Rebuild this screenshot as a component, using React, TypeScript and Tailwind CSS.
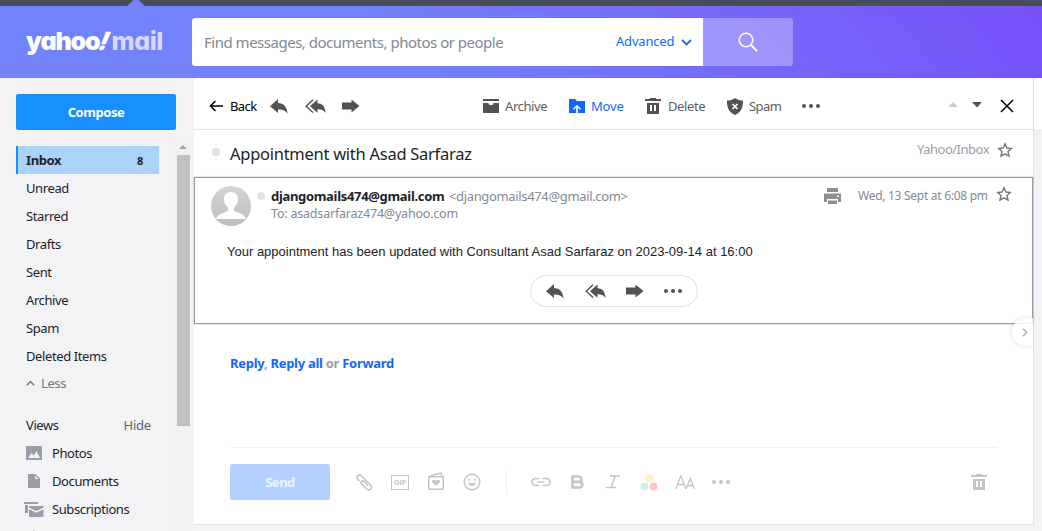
import type { ReactNode } from "react";

type IconProps = { w: number; h: number; className?: string; children: ReactNode };

function Icon({ w, h, className = "", children }: IconProps) {
  return (
    <svg width={w} height={h} viewBox={`0 0 ${w} ${h}`} fill="currentColor" className={`shrink-0 ${className}`}>
      {children}
    </svg>
  );
}

function ReplyIcon({ className = "" }) {
  return (
    <Icon w={18} h={15} className={className}>
      <path d="M8 0v4c5.500 0 9 3.500 9.500 11-2-3.500-4.500-4.500-9.500-4.500v3.500L0 7.300z" />
    </Icon>
  );
}

function ReplyAllIcon({ className = "" }) {
  return (
    <Icon w={21} h={15} className={className}>
      <path d="M12.500.500v3.700c4.500 0 7.700 3 8 9.800-2-3-4-3.800-8-3.800v3.500L5 7.200z" />
      <path d="M8 .700 1.200 7.200 8 13.500" fill="none" stroke="currentColor" strokeWidth="1.400" />
    </Icon>
  );
}

function ForwardIcon({ className = "" }) {
  return (
    <Icon w={18} h={14} className={className}>
      <path d="M0 3.500h9.500V.500L17.500 7l-8 6.500v-3H0z" />
    </Icon>
  );
}

function DotsIcon({ className = "" }) {
  return (
    <Icon w={18} h={6} className={className}>
      <circle cx="2" cy="3" r="2" />
      <circle cx="9" cy="3" r="2" />
      <circle cx="16" cy="3" r="2" />
    </Icon>
  );
}

function TrashIcon({ className = "" }) {
  return (
    <Icon w={16} h={16} className={className}>
      <path d="M0 1h5V0h6v1h5v2H0zM2 5h12v11H2zm3 2v6h2V7zm4 0v6h2V7z" fillRule="evenodd" />
    </Icon>
  );
}

function StarIcon({ className = "" }) {
  return (
    <Icon w={16} h={16} className={className}>
      <path
        d="M8 1.800 9.900 6l4.500.500-3.400 3 1 4.600L8 11.800l-4 2.300 1-4.600-3.400-3L6.100 6z"
        fill="none"
        stroke="currentColor"
        strokeWidth="1.400"
      />
    </Icon>
  );
}

const folders = ["Unread", "Starred", "Drafts", "Sent", "Archive", "Spam", "Deleted Items"];

function Header() {
  return (
    <header className="shrink-0">
      <div className="flex h-[6px] bg-[#474e57]">
        <Icon w={18} h={6} className="ml-[127px] text-[#7282fb]">
          <path d="M0 6 6 .500Q9-1.500 12 .500L18 6z" />
        </Icon>
      </div>
      <div className="flex h-[72px] items-start bg-[linear-gradient(50deg,#7282fb_0%,#7282fb_38%,#746bfa_66%,#7850fa_100%)]">
        <div className="mt-[19px] ml-[26px] flex h-[32px] w-[166px] font-[Inter,sans-serif] text-[25px] leading-[32px] font-black tracking-[-1.100px] whitespace-nowrap text-white [font-feature-settings:'cv11','ss01']">
          <span>yahoo</span>
          <span className="inline-block w-[12px] -skew-x-[22deg]">!</span>
          <span className="font-extrabold tracking-[-0.500px] text-[#d7dafe]">mail</span>
        </div>
        <div className="mt-[12px] flex h-[48px] w-[511px] items-center rounded-l-[3px] bg-white">
          <span className="ml-[12px] w-[412px] pt-px text-[15px] tracking-[-0.490px] whitespace-nowrap text-[#828a93]">
            Find messages, documents, photos or people
          </span>
          <span className="w-[65px] text-[13px] tracking-[-0.200px] text-[#0f69ff]">Advanced</span>
          <Icon w={11} h={7} className="text-[#0f69ff]">
            <path d="M1 1l4.500 4.500L10 1" fill="none" stroke="currentColor" strokeWidth="1.800" />
          </Icon>
        </div>
        <div className="mt-[12px] flex h-[48px] w-[90px] items-center justify-center rounded-r-[3px] bg-white/30 text-white">
          <Icon w={20} h={20}>
            <circle cx="8" cy="8" r="6.800" fill="none" stroke="currentColor" strokeWidth="1.500" />
            <path d="m13 13 6 6" stroke="currentColor" strokeWidth="1.800" />
          </Icon>
        </div>
      </div>
    </header>
  );
}

function ViewRow({ icon, label }: { icon: ReactNode; label: string }) {
  return (
    <div className="flex h-[28px] items-center">
      <div className="flex w-[26px] items-center text-[#979ea8]">{icon}</div>
      <span className="pt-[2px]">{label}</span>
    </div>
  );
}

function Sidebar() {
  return (
    <aside className="flex w-[194px] shrink-0 flex-col overflow-hidden bg-[#f3f3f6]">
      <button className="mt-[16px] ml-[16px] h-[36px] w-[160px] shrink-0 rounded-[2px] bg-[#188fff] pt-[2px] text-[13px] font-bold tracking-[-0.450px] text-white">
        Compose
      </button>
      <div className="mt-[8px] flex min-h-0 flex-1">
        <nav className="w-[175px] shrink-0 text-[13px] tracking-[-0.400px] whitespace-nowrap text-[#1d2228]">
          <div className="mt-[8px] ml-[16px] flex h-[28px] w-[143px] items-center justify-between border-l-2 border-[#188fff] bg-[#abd3fa] pt-[2px] pr-[16px] pl-[8px] font-bold">
            <span>Inbox</span>
            <span className="text-[11px]">8</span>
          </div>
          <div className="ml-[26px]">
            {folders.map((folder) => (
              <div key={folder} className="flex h-[28px] items-center pt-[2px]">
                {folder}
              </div>
            ))}
            <div className="flex h-[26px] items-center text-[#6e7780]">
              <Icon w={9} h={6} className="mr-[6px]">
                <path d="M.800 5.200 4.500 1.500l3.700 3.700" fill="none" stroke="currentColor" strokeWidth="1.500" />
              </Icon>
              <span className="pt-[2px]">Less</span>
            </div>
            <div className="mt-[15px] flex h-[28px] w-[125px] items-center justify-between pt-[2px]">
              <span>Views</span>
              <span className="tracking-[-0.200px] text-[#5b636a]">Hide</span>
            </div>
            <ViewRow
              label="Photos"
              icon={
                <Icon w={16} h={14} className="ml-0">
                  <path d="M0 0h16v14H0zm2 12h12L10.500 5 8 9.500 5.500 7z" fillRule="evenodd" />
                </Icon>
              }
            />
            <ViewRow
              label="Documents"
              icon={
                <Icon w={12} h={14} className="ml-[2px]">
                  <path d="M0 0h7.500L12 4.500V14H0zm7 1.500V5h3.500z" fillRule="evenodd" />
                </Icon>
              }
            />
            <ViewRow
              label="Subscriptions"
              icon={
                <Icon w={20} h={15} className="ml-[-2px]">
                  <path d="M0 0h14v2H0zM1 3h3v8H1zM5 4h14.500v1.500L12.500 9 5 5.500zM5 7.200l7.500 3.500 7-3.500V15H5z" />
                </Icon>
              }
            />
            <div className="flex h-[28px] items-center">
              <Icon w={16} h={14} className="text-[#979ea8]">
                <path d="M8 0 11 4H16V14H0V4H5z" />
              </Icon>
            </div>
          </div>
        </nav>
        <div className="flex w-[15px] flex-col items-end bg-[#f1f1f1]">
          <div className="flex h-[17px] w-full items-center justify-center text-[#a3a3a3]">
            <Icon w={8} h={4}>
              <path d="M4 0l4 4H0z" />
            </Icon>
          </div>
          <div className="h-[271px] w-[13px] bg-[#c1c1c1]" />
        </div>
      </div>
    </aside>
  );
}

function Toolbar() {
  return (
    <div className="flex h-[52px] shrink-0 items-center border-b border-[#e0e4e9] pt-[5px] text-[13px] tracking-[-0.300px] whitespace-nowrap text-[#5b5d61]">
      <Icon w={14} h={12} className="ml-[15px] text-black">
        <path d="M6.500 1 1.500 6l5 5M1.500 6H14" fill="none" stroke="currentColor" strokeWidth="1.600" />
      </Icon>
      <span className="ml-[7px] w-[40px] pt-[2px] tracking-[-0.600px] text-black">Back</span>
      <ReplyIcon className="text-[#505254]" />
      <ReplyAllIcon className="ml-[17px] text-[#505254]" />
      <ForwardIcon className="ml-[16px] text-[#505254]" />
      <Icon w={16} h={14} className="ml-[123px] text-[#505254]">
        <path d="M0 0h16v2H0zM0 4h5.500c0 3 5 3 5 0H16v10H0z" />
      </Icon>
      <span className="ml-[6px] w-[64px] pt-[2px] tracking-[-0.400px]">Archive</span>
      <Icon w={16} h={14} className="text-[#0f69ff]">
        <path d="M0 0h6l2 2h8v12H0zM7.200 14h1.600V8.500l2.200 2.200 1-1L8 5.700l-4 4 1 1 2.200-2.200z" fillRule="evenodd" />
      </Icon>
      <span className="ml-[6px] w-[54px] pt-[2px] tracking-[-0.200px] text-[#0f69ff]">Move</span>
      <TrashIcon className="text-[#505254]" />
      <span className="ml-[7px] w-[59px] pt-[2px] tracking-[-0.400px]">Delete</span>
      <Icon w={16} h={17} className="text-[#505254]">
        <path d="M8 0c2.500 2 5 2.500 8 2.500C16.300 10 13.500 15 8 17 2.500 15 -.300 10 0 2.500 3 2.500 5.500 2 8 0z" />
        <path d="m5.500 6 5 5m0-5-5 5" stroke="white" strokeWidth="1.600" />
      </Icon>
      <span className="ml-[6px] w-[53px] pt-[2px] tracking-[-0.600px]">Spam</span>
      <DotsIcon className="text-[#505254]" />
      <Icon w={10} h={5} className="mt-[-4px] ml-[128px] text-[#cccccc]">
        <path d="M5 0l5 5H0z" />
      </Icon>
      <Icon w={10} h={5} className="mt-[-4px] ml-[14px] text-[#505254]">
        <path d="M0 0h10L5 5.500z" />
      </Icon>
      <Icon w={14} h={14} className="ml-[18px] text-black">
        <path d="m1 1 12 12M13 1 1 13" stroke="currentColor" strokeWidth="1.500" />
      </Icon>
    </div>
  );
}

function Message() {
  return (
    <article className="flex h-[147px] shrink-0 flex-col border border-[#9297a3] shadow-[0_0_2px_rgba(0,0,0,0.25)]">
      <div className="flex h-[58px] items-start whitespace-nowrap">
        <svg width="40" height="40" viewBox="0 0 40 40" className="mt-[8px] ml-[16px] shrink-0">
          <defs>
            <clipPath id="avatar">
              <circle cx="20" cy="20" r="20" />
            </clipPath>
            <linearGradient id="shade" x2="0" y2="1">
              <stop stopColor="#d4d4d4" />
              <stop offset="1" stopColor="#bdbdbd" />
            </linearGradient>
          </defs>
          <g clipPath="url(#avatar)">
            <path d="M0 0h40v40H0z" fill="url(#shade)" />
            <path
              d="M5 33c1-4 6-6 11-7.500 1.500-1 1.200-3 .500-4.500-1.500-1-3.300-3.500-3.300-6C12.500 9 15 6 20 6s7.500 3 6.800 9c0 2.500-1.800 5-3.300 6-.700 1.500-1 3.500.500 4.500 5 1.500 10 3.500 11 7.500z"
              fill="white"
            />
          </g>
        </svg>
        <div className="mt-[14px] ml-[6px] size-[8px] shrink-0 rounded-full bg-[#e0e4e9]" />
        <div className="mt-[9px] ml-[6px] w-[551px] text-[13px] leading-[18px] text-[#828a93]">
          <div className="flex">
            <span className="w-[178px] font-bold tracking-[-0.320px] text-[#1d2228]">djangomails474@gmail.com</span>
            <span className="tracking-[-0.350px]">&lt;djangomails474@gmail.com&gt;</span>
          </div>
          <div className="text-[12.500px] tracking-[-0.200px]">To: asadsarfaraz474@yahoo.com</div>
        </div>
        <Icon w={17} h={16} className="mt-[10px] ml-[2px] text-[#8c8e91]">
          <path d="M3 0h11v4H3zM0 5.500h17V14h-3v-3H3v3H0zM4 12.500h9V16H4z" />
          <path d="M13 7.500h2v1.500h-2z" fill="white" />
        </Icon>
        <span className="mt-[9px] ml-[17px] w-[138px] text-[12px] leading-[18px] tracking-[-0.280px] text-[#828a93]">
          Wed, 13 Sept at 6:08 pm
        </span>
        <StarIcon className="mt-[8px] text-[#6e7780]" />
      </div>
      <p className="mt-[7px] ml-[32px] font-['Liberation_Sans',sans-serif] text-[13px] leading-[18px] whitespace-nowrap text-[#1d2228]">
        Your appointment has been updated with Consultant Asad Sarfaraz on 2023-09-14 at 16:00
      </p>
      <div className="mt-[14px] ml-[335px] flex h-[32px] w-[168px] items-center rounded-full border border-[#e0e0e8] pl-[15px] text-[#505254]">
        <ReplyIcon />
        <ReplyAllIcon className="ml-[21px]" />
        <ForwardIcon className="ml-[20px]" />
        <DotsIcon className="ml-[20px]" />
      </div>
    </article>
  );
}

function Composer() {
  return (
    <div className="mt-auto mr-[36px] ml-[36px] flex h-[77px] shrink-0 items-start border-t border-[#f2f2f4] text-[#c4c5c6]">
      <button className="mt-[16px] h-[36px] w-[100px] rounded-[2px] bg-[#b4d0ff] pt-[2px] text-[13px] font-bold tracking-[-0.500px] text-[#f0f5ff]">
        Send
      </button>
      <div className="mt-[16px] flex h-[36px] flex-1 items-center">
        <Icon w={17} h={17} className="ml-[26px]">
          <path
            d="M3.500 7 1.800 5.200C-.500 2.500 3-.500 5.400 1.800l9.300 9.400c2.500 3-1.200 6.500-3.900 4L5.500 9.800C4 8 6.500 5.800 8.200 7.500l4 4.200"
            fill="none"
            stroke="currentColor"
            strokeWidth="1.600"
          />
        </Icon>
        <span className="mt-px ml-[18px] flex h-[15px] w-[18px] items-center justify-center border-[1.500px] border-current font-['Liberation_Sans',sans-serif] text-[7.500px] font-bold">
          GIF
        </span>
        <Icon w={16} h={18} className="mt-[-2px] ml-[19px]">
          <path d="M.800 4.800h14.400v12.400H.800zM2 4l11-3 .800 3" fill="none" stroke="currentColor" strokeWidth="1.500" />
          <path d="M8 14 4.300 10.500C3 8.500 6 6.500 8 9c2-2.500 5-.500 3.700 1.500z" />
        </Icon>
        <Icon w={18} h={18} className="ml-[19px]">
          <circle cx="9" cy="9" r="7.800" fill="none" stroke="currentColor" strokeWidth="1.500" />
          <path d="M5 7.500V6h2v1.500zM11 7.500V6h2v1.500zM5 10h8c-.500 4-7.500 4-8 0z" />
        </Icon>
        <div className="ml-[25px] h-[24px] w-px bg-[#f0f0f2]" />
        <Icon w={20} h={10} className="ml-[24px]">
          <path
            d="M8.500 1.500h-4a3.500 3.500 0 0 0 0 7h4M11.500 1.500h4a3.500 3.500 0 0 1 0 7h-4M6.500 5h7"
            fill="none"
            stroke="currentColor"
            strokeWidth="1.700"
          />
        </Icon>
        <Icon w={13} h={14} className="ml-[20px]">
          <path
            d="M1.500 1.500h6.300a2.600 2.600 0 0 1 0 5.300H1.500zm0 5.300h7a2.700 2.700 0 0 1 0 5.700h-7z"
            fill="none"
            stroke="currentColor"
            strokeWidth="2.700"
          />
        </Icon>
        <Icon w={14} h={14} className="ml-[22px]">
          <path d="M4 1h10M0 12.500h10M9.200 1 5 12.500" fill="none" stroke="currentColor" strokeWidth="1.500" />
        </Icon>
        <Icon w={18} h={17} className="ml-[20px]">
          <circle cx="9" cy="4.200" r="4" fill="#fff0c4" />
          <circle cx="4.300" cy="12.500" r="4" fill="#c7f2e9" />
          <circle cx="13.500" cy="12.500" r="4" fill="#ffc4c9" />
        </Icon>
        <Icon w={20} h={14} className="ml-[17px]">
          <path
            d="M.700 14 5.800.800 10.900 14M2.500 9.500h6.600M11 14 15.300 3.500 19.400 14M12.500 10.500h5.600"
            fill="none"
            stroke="currentColor"
            strokeWidth="1.300"
          />
        </Icon>
        <DotsIcon className="ml-[17px]" />
        <TrashIcon className="mr-[10px] ml-auto" />
      </div>
    </div>
  );
}

export default function App() {
  return (
    <div className="flex h-[531px] w-[1042px] flex-col overflow-hidden bg-[#f3f3f6] font-['Noto_Sans',sans-serif]">
      <Header />
      <div className="flex min-h-0 flex-1">
        <Sidebar />
        <main className="relative flex h-[447px] w-[840px] shrink-0 flex-col border-r border-b border-[#dfe0e8] bg-white">
          <Toolbar />
          <div className="flex h-[47px] shrink-0 items-center whitespace-nowrap">
            <div className="mt-[-3px] ml-[18px] size-[8px] rounded-full bg-[#e0e4e9]" />
            <h1 className="ml-[10px] w-[687px] pt-[2px] text-[16.500px] tracking-[-0.270px] text-[#1d2228]">
              Appointment with Asad Sarfaraz
            </h1>
            <span className="mt-[-8px] w-[80px] text-[13px] tracking-[-0.500px] text-[#979ea8]">Yahoo/Inbox</span>
            <StarIcon className="mt-[-8px] text-[#6e7780]" />
          </div>
          <Message />
          <p className="mt-[30px] ml-[36px] text-[13px] leading-[18px] font-bold tracking-[-0.280px] text-[#979ea8]">
            <span className="text-[#0f69ff]">Reply</span>, <span className="text-[#0f69ff]">Reply all</span> or{" "}
            <span className="text-[#0f69ff]">Forward</span>
          </p>
          <Composer />
          <div className="absolute top-[240px] right-0 flex h-[28px] w-[21px] items-center rounded-l-full bg-white/85 pl-[10px] text-[#aeb0b3] shadow-[-1px_0_4px_rgba(0,0,0,0.120)]">
            <Icon w={6} h={9}>
              <path d="m1 .800 3.700 3.700L1 8.200" fill="none" stroke="currentColor" strokeWidth="1.500" />
            </Icon>
          </div>
        </main>
        <div className="h-[51px] flex-1 bg-white" />
      </div>
    </div>
  );
}
